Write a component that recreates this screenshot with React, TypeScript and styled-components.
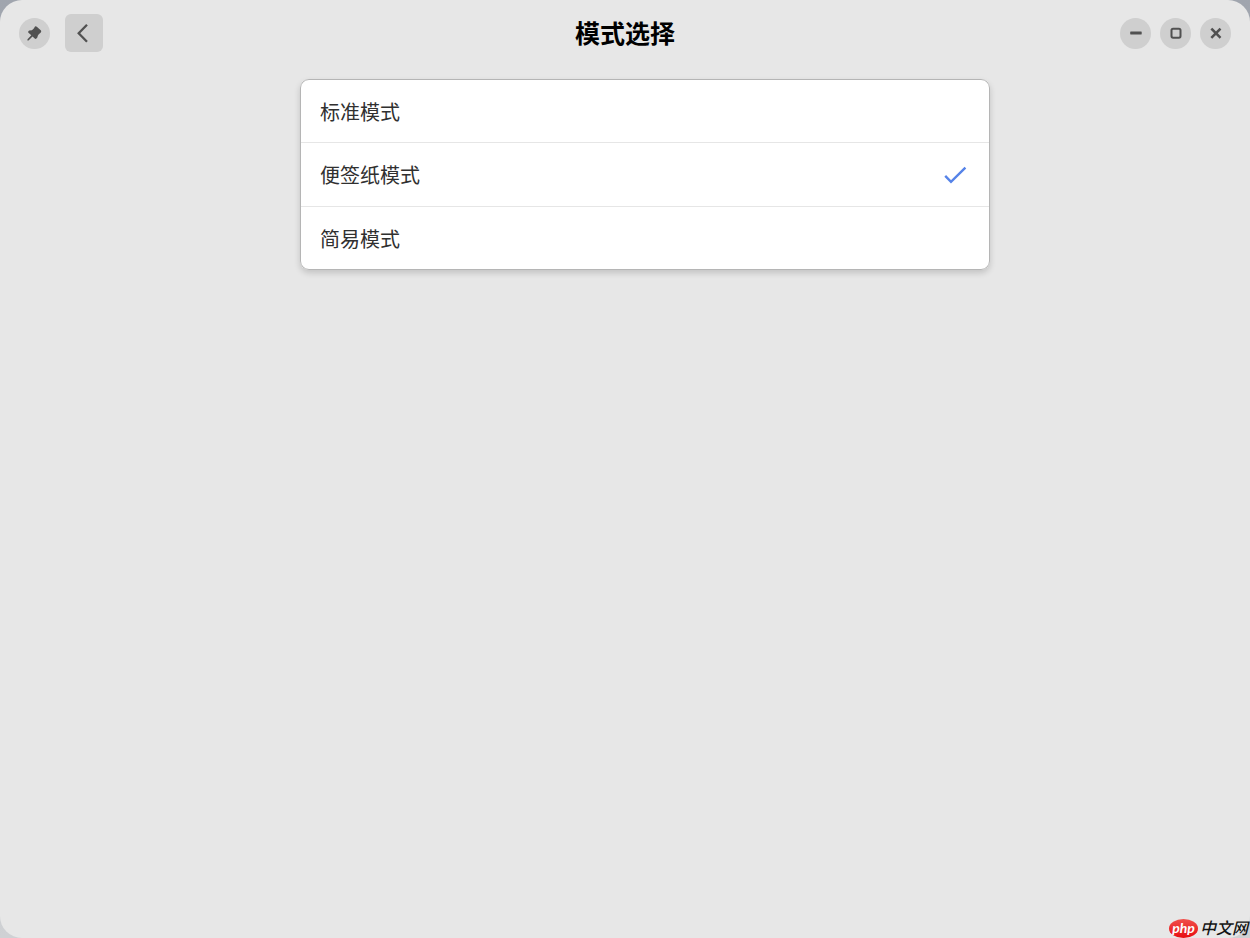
import React, { useState } from "react";
import styled, { createGlobalStyle } from "styled-components";

const GlobalStyle = createGlobalStyle`
  *, *::before, *::after { box-sizing: border-box; }
  body {
    margin: 0;
    background: linear-gradient(#a0a5ae, #cfd1d4);
    font-family: "Noto Sans", "Noto Sans CJK SC", sans-serif;
  }
`;

const AppWindow = styled.div`
  position: relative;
  display: flex;
  flex-direction: column;
  min-height: 100vh;
  border-radius: 22px;
  background: #e7e7e7;
`;

const HeaderBar = styled.header`
  display: grid;
  grid-template-columns: 1fr auto 1fr;
  align-items: center;
  padding: 14px 19px;
`;

const Title = styled.h1`
  margin: 0;
  padding-bottom: 2px;
  font-family: "Noto Sans CJK SC", sans-serif;
  font-size: 25px;
  line-height: 36px;
  font-weight: 700;
  color: #000;
`;

const HeaderGroup = styled.div<{ $end?: boolean }>`
  display: flex;
  align-items: center;
  justify-content: ${(p) => (p.$end ? "flex-end" : "flex-start")};
  gap: ${(p) => (p.$end ? 9 : 15)}px;
`;

const HeaderButton = styled.button<{ $square?: boolean }>`
  display: grid;
  place-items: center;
  width: ${(p) => (p.$square ? 38 : 31)}px;
  height: ${(p) => (p.$square ? 38 : 31)}px;
  padding: 0;
  border: 0;
  border-radius: ${(p) => (p.$square ? "6px" : "50%")};
  background: #cfcfcf;
  color: #515151;
  cursor: pointer;

  &:hover { background: #c6c6c6; }

  svg { display: block; }
`;

const Content = styled.main`
  width: 100%;
  max-width: 730px;
  margin: 0 auto;
  padding: 13px 0 20px 40px;
`;

const ModeList = styled.fieldset`
  min-width: 0;
  margin: 0;
  padding: 0;
  border: 1px solid #b5b5b5;
  border-radius: 9px;
  background: #fff;
  box-shadow: 0 3px 6px rgba(0, 0, 0, 0.16);
`;

const ModeRow = styled.label`
  display: flex;
  align-items: center;
  justify-content: space-between;
  min-height: 62px;
  padding: 1px 22px 0 19px;
  font-family: "Noto Sans CJK SC", sans-serif;
  font-size: 20px;
  line-height: 30px;
  color: #303030;
  cursor: pointer;

  & + & {
    min-height: 64px;
    border-top: 1px solid #e6e6e6;
  }

  &:last-child { min-height: 63px; }
`;

const ModeMark = styled.span`
  display: grid;
  width: 24px;
  height: 24px;

  > * { grid-area: 1 / 1; }
  svg { visibility: hidden; pointer-events: none; }
  input:checked + svg { visibility: visible; }
`;

const ModeRadio = styled.input`
  appearance: none;
  width: 24px;
  height: 24px;
  margin: 0;
  border-radius: 4px;
  outline-color: #5683e8;
  cursor: pointer;
`;

const SiteMark = styled.div`
  position: absolute;
  right: 0;
  bottom: 0;
  display: flex;
  align-items: flex-start;
  gap: 2px;
  height: 19px;
  line-height: 17px;
  font-style: italic;
`;

const SiteBadge = styled.span`
  width: 29px;
  height: 19px;
  border-radius: 50%;
  background: linear-gradient(#f0504c, #e80c10);
  color: #fff;
  font-family: Lato, sans-serif;
  font-size: 14px;
  font-weight: 700;
  text-align: center;
`;

const SiteName = styled.span`
  padding-right: 2px;
  font-family: "Noto Sans CJK SC", sans-serif;
  font-size: 16px;
  font-weight: 500;
  color: #151515;
`;

const PinIcon = () => (
  <svg width="15" height="15" viewBox="0 0 15 15" aria-hidden="true">
    <path
      d="M8 .4Q9 0 9.8 .8L14 4.6Q14.6 5.4 13.8 6.6L11.8 8.2 10.9 9.6 10.2 11.8Q9.2 13.2 8 12.8L5.5 10.4 1.5 14.4 .4 14.4 .5 13.3 4.3 9.3 1.2 6.4Q.9 5.4 2.2 4.6L4.9 4.2 6.8 2.6Z"
      fill="currentColor"
    />
  </svg>
);

const BackIcon = () => (
  <svg width="20" height="20" viewBox="0 0 20 20" fill="none" stroke="currentColor" strokeWidth="2.3" aria-hidden="true">
    <path d="M13 1.7 4.7 10.2 13 18.7" />
  </svg>
);

const MinimizeIcon = () => (
  <svg width="15" height="15" viewBox="0 0 15 15" aria-hidden="true">
    <rect x="2.2" y="5.6" width="11.5" height="2.8" rx=".4" fill="currentColor" />
  </svg>
);

const MaximizeIcon = () => (
  <svg width="15" height="15" viewBox="0 0 15 15" aria-hidden="true">
    <rect x="3.5" y="2.7" width="9" height="9" rx="1.6" fill="none" stroke="currentColor" strokeWidth="2" />
  </svg>
);

const CloseIcon = () => (
  <svg width="15" height="15" viewBox="0 0 15 15" aria-hidden="true">
    <path d="M4.2 3.5 11.6 10.9M11.6 3.5 4.2 10.9" fill="none" stroke="currentColor" strokeWidth="2.5" strokeLinecap="square" />
  </svg>
);

const CheckIcon = () => (
  <svg width="24" height="24" viewBox="0 0 24 24" fill="none" stroke="#5683e8" strokeWidth="2.4" aria-hidden="true">
    <path d="M2.2 12.9 8 18.8 22.4 4.6" />
  </svg>
);

const modes = [
  { id: "standard", label: "标准模式" },
  { id: "note", label: "便签纸模式" },
  { id: "simple", label: "简易模式" },
];

export default function App() {
  const [mode, setMode] = useState("note");

  return (
    <>
      <GlobalStyle />
      <AppWindow>
        <HeaderBar>
          <HeaderGroup>
            <HeaderButton type="button" aria-label="置顶"><PinIcon /></HeaderButton>
            <HeaderButton type="button" aria-label="返回" $square><BackIcon /></HeaderButton>
          </HeaderGroup>
          <Title>模式选择</Title>
          <HeaderGroup $end>
            <HeaderButton type="button" aria-label="最小化"><MinimizeIcon /></HeaderButton>
            <HeaderButton type="button" aria-label="最大化"><MaximizeIcon /></HeaderButton>
            <HeaderButton type="button" aria-label="关闭"><CloseIcon /></HeaderButton>
          </HeaderGroup>
        </HeaderBar>
        <Content>
          <ModeList aria-label="模式选择">
            {modes.map(({ id, label }) => (
              <ModeRow key={id} htmlFor={id}>
                {label}
                <ModeMark>
                  <ModeRadio
                    type="radio"
                    name="mode"
                    id={id}
                    value={id}
                    checked={mode === id}
                    onChange={() => setMode(id)}
                  />
                  <CheckIcon />
                </ModeMark>
              </ModeRow>
            ))}
          </ModeList>
        </Content>
        <SiteMark>
          <SiteBadge>php</SiteBadge>
          <SiteName>中文网</SiteName>
        </SiteMark>
      </AppWindow>
    </>
  );
}
